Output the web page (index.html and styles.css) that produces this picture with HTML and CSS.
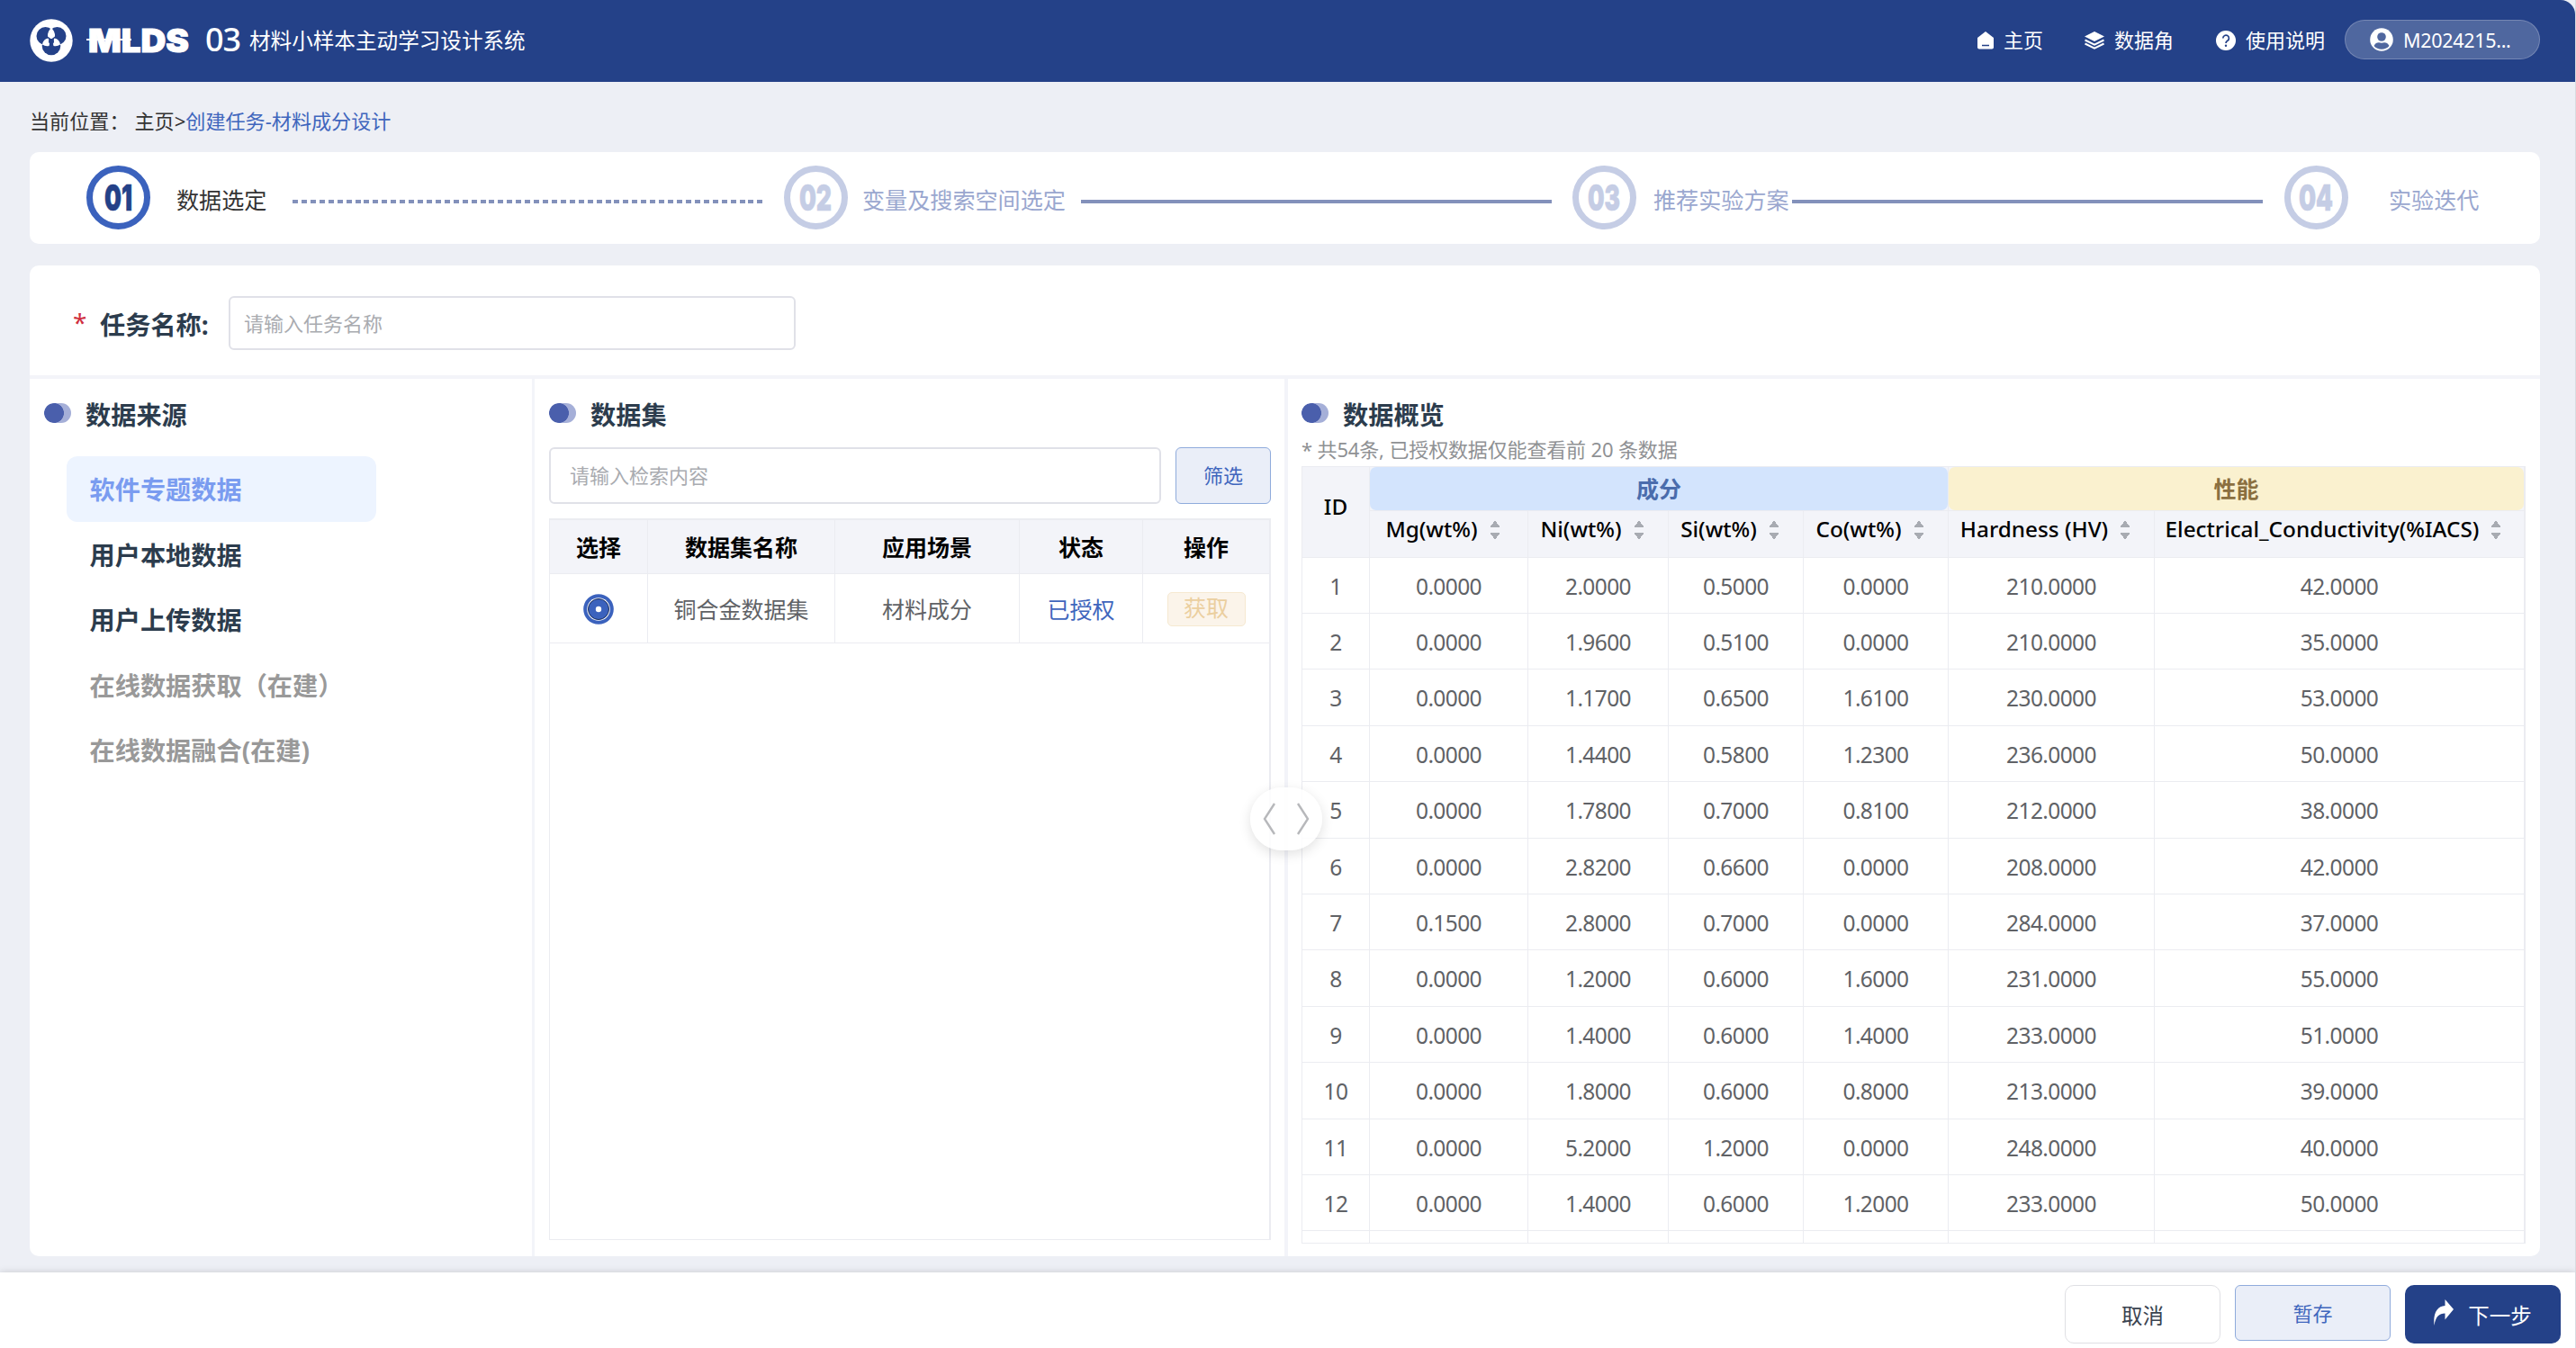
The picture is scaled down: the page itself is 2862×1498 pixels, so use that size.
FILE: index.html
```html
<!DOCTYPE html>
<html lang="zh-CN">
<head>
<meta charset="utf-8">
<title>MLDS 材料小样本主动学习设计系统</title>
<link rel="stylesheet" href="styles.css">
</head>
<body>
<header class="topbar">
  <div class="brand">
    <svg class="brand-mark" width="48" height="48" viewBox="0 0 48 48">
      <circle cx="24" cy="24" r="23.7" fill="#fff"/>
      <circle cx="17.5" cy="19" r="10" fill="#244188"/>
      <circle cx="30.5" cy="19" r="10" fill="#244188"/>
      <circle cx="24" cy="30" r="10.3" fill="#244188"/>
      <path d="M24 10q4.500 4 4 9.500l-4 3-4-3q-.500-5.500 4-9.500zM14 28.500q1-6 6.500-7l2 4-1 4.500q-4 1-7.500-1.500zM34 28.500q-1-6-6.500-7l-2 4 1 4.500q4 1 7.500-1.500z" fill="#fff"/>
      <circle cx="24" cy="25" r="3" fill="#244188"/>
    </svg>
    <svg class="brand-name" width="118" height="46" viewBox="0 0 118 46">
      <text x="2" y="36" textLength="112" lengthAdjust="spacingAndGlyphs">MLDS</text>
      <path d="M0 22h50M62 22h6" stroke="#fff" stroke-width="2"/>
    </svg>
    <span class="brand-no">03</span>
    <span class="brand-title">材料小样本主动学习设计系统</span>
  </div>
  <nav class="nav">
    <a class="nav-item nav-home"><svg width="18" height="20" viewBox="0 0 18 20"><path d="M9 0l9 7v10.500a2 2 0 0 1-2 2H2a2 2 0 0 1-2-2V7z" fill="#fff"/><path d="M5 15.500h8" stroke="#244188" stroke-width="1.500"/></svg><span>主页</span></a>
    <a class="nav-item nav-data"><svg width="22" height="20" viewBox="0 0 22 20"><path d="M11 0l11 5.500-11 5.500L0 5.500z" fill="#fff"/><path d="M.5 9.500L11 14.700l10.500-5.200M.5 13.500L11 18.700l10.500-5.200" fill="none" stroke="#fff" stroke-width="2"/></svg><span>数据角</span></a>
    <a class="nav-item nav-help"><svg width="22" height="22" viewBox="0 0 22 22"><circle cx="11" cy="11" r="11" fill="#fff"/><path d="M7.800 8.500a3.300 3.300 0 1 1 5 2.800c-1.300.8-1.800 1.300-1.800 2.800" fill="none" stroke="#244188" stroke-width="1.700"/><circle cx="11" cy="16.800" r="1.200" fill="#244188"/></svg><span>使用说明</span></a>
    <a class="user"><svg width="26" height="26" viewBox="0 0 26 26"><circle cx="13" cy="13" r="12.800" fill="#fff"/><circle cx="13" cy="10" r="4.800" fill="#50679f"/><path d="M4.500 20c2-4 5-4.200 8.500-3.200 3.500-1 6.500-.8 8.500 3.200a11.500 11.500 0 0 1-17 0z" fill="#50679f"/></svg>M2024215...</a>
  </nav>
</header>

<main class="page">
  <div class="crumb"><span>当前位置：</span><span class="crumb-home">主页&gt;</span><span class="crumb-now">创建任务-材料成分设计</span></div>

  <section class="steps">
    <svg class="step-no active" width="71" height="71" viewBox="0 0 71 71"><circle cx="35.500" cy="35.500" r="32"/><text x="20" y="50" textLength="31" lengthAdjust="spacingAndGlyphs">01</text></svg>
    <span class="step-text s1">数据选定</span>
    <span class="step-line dashed"></span>
    <svg class="step-no" width="71" height="71" viewBox="0 0 71 71"><circle cx="35.500" cy="35.500" r="32"/><text x="17" y="50" textLength="36" lengthAdjust="spacingAndGlyphs">02</text></svg>
    <span class="step-text s2">变量及搜索空间选定</span>
    <span class="step-line"></span>
    <svg class="step-no" width="71" height="71" viewBox="0 0 71 71"><circle cx="35.500" cy="35.500" r="32"/><text x="17" y="50" textLength="36" lengthAdjust="spacingAndGlyphs">03</text></svg>
    <span class="step-text s3">推荐实验方案</span>
    <span class="step-line last"></span>
    <svg class="step-no" width="71" height="71" viewBox="0 0 71 71"><circle cx="35.500" cy="35.500" r="32"/><text x="16" y="50" textLength="38" lengthAdjust="spacingAndGlyphs">04</text></svg>
    <span class="step-text s4">实验迭代</span>
  </section>

  <section class="card">
    <div class="form-row">
      <span class="star">*</span>
      <label class="form-label">任务名称:</label>
      <div class="input name-input">请输入任务名称</div>
    </div>
    <div class="columns">
      <div class="col source">
        <h2 class="title"><i class="dots"></i>数据来源</h2>
        <ul class="source-list">
          <li class="on">软件专题数据</li>
          <li>用户本地数据</li>
          <li>用户上传数据</li>
          <li class="off">在线数据获取（在建）</li>
          <li class="off">在线数据融合(在建)</li>
        </ul>
      </div>
      <div class="col dataset">
        <h2 class="title"><i class="dots"></i>数据集</h2>
        <div class="search">
          <div class="input search-input">请输入检索内容</div>
          <div class="btn-filter">筛选</div>
        </div>
        <div class="table-box set-box">
          <table class="set-table">
            <colgroup><col class="a1"><col class="a2"><col class="a3"><col class="a4"><col class="a5"></colgroup>
            <thead><tr><th>选择</th><th>数据集名称</th><th>应用场景</th><th>状态</th><th>操作</th></tr></thead>
            <tbody><tr>
              <td><svg class="radio" width="34" height="34" viewBox="0 0 34 34"><circle cx="17" cy="17" r="16.800" fill="#3b62bd"/><circle cx="17" cy="17" r="12.800" fill="#fff"/><circle cx="17" cy="17" r="11.500" fill="#3b62bd" stroke="#1b2f5e" stroke-width="1"/><circle cx="17" cy="17" r="3.200" fill="#fff"/></svg></td>
              <td>铜合金数据集</td><td>材料成分</td><td class="granted">已授权</td><td><span class="btn-get">获取</span></td>
            </tr></tbody>
          </table>
        </div>
      </div>
      <div class="col overview">
        <h2 class="title"><i class="dots"></i>数据概览</h2>
        <p class="note">* 共54条, 已授权数据仅能查看前 20 条数据</p>
        <div class="table-box data-box">
          <table class="data-table">
            <colgroup><col class="c1"><col class="c2"><col class="c3"><col class="c4"><col class="c5"><col class="c6"><col class="c7"></colgroup>
            <thead>
              <tr class="groups"><th rowspan="2" class="id">ID</th><th colspan="4" class="group"><div class="comp">成分</div></th><th colspan="2" class="group"><div class="perf">性能</div></th></tr>
              <tr class="fields"><th>Mg(wt%)<i class="sort"></i></th><th>Ni(wt%)<i class="sort"></i></th><th>Si(wt%)<i class="sort"></i></th><th>Co(wt%)<i class="sort"></i></th><th>Hardness (HV)<i class="sort"></i></th><th>Electrical_Conductivity(%IACS)<i class="sort"></i></th></tr>
            </thead>
            <tbody>
              <tr><td>1</td><td>0.0000</td><td>2.0000</td><td>0.5000</td><td>0.0000</td><td>210.0000</td><td>42.0000</td></tr>
              <tr><td>2</td><td>0.0000</td><td>1.9600</td><td>0.5100</td><td>0.0000</td><td>210.0000</td><td>35.0000</td></tr>
              <tr><td>3</td><td>0.0000</td><td>1.1700</td><td>0.6500</td><td>1.6100</td><td>230.0000</td><td>53.0000</td></tr>
              <tr><td>4</td><td>0.0000</td><td>1.4400</td><td>0.5800</td><td>1.2300</td><td>236.0000</td><td>50.0000</td></tr>
              <tr><td>5</td><td>0.0000</td><td>1.7800</td><td>0.7000</td><td>0.8100</td><td>212.0000</td><td>38.0000</td></tr>
              <tr><td>6</td><td>0.0000</td><td>2.8200</td><td>0.6600</td><td>0.0000</td><td>208.0000</td><td>42.0000</td></tr>
              <tr><td>7</td><td>0.1500</td><td>2.8000</td><td>0.7000</td><td>0.0000</td><td>284.0000</td><td>37.0000</td></tr>
              <tr><td>8</td><td>0.0000</td><td>1.2000</td><td>0.6000</td><td>1.6000</td><td>231.0000</td><td>55.0000</td></tr>
              <tr><td>9</td><td>0.0000</td><td>1.4000</td><td>0.6000</td><td>1.4000</td><td>233.0000</td><td>51.0000</td></tr>
              <tr><td>10</td><td>0.0000</td><td>1.8000</td><td>0.6000</td><td>0.8000</td><td>213.0000</td><td>39.0000</td></tr>
              <tr><td>11</td><td>0.0000</td><td>5.2000</td><td>1.2000</td><td>0.0000</td><td>248.0000</td><td>40.0000</td></tr>
              <tr><td>12</td><td>0.0000</td><td>1.4000</td><td>0.6000</td><td>1.2000</td><td>233.0000</td><td>50.0000</td></tr>
              <tr><td></td><td></td><td></td><td></td><td></td><td></td><td></td></tr>
            </tbody>
          </table>
        </div>
        <div class="splitter"><svg width="52" height="36" viewBox="0 0 52 36"><path d="M13 1L2 18l11 17M39 1l11 17-11 17" fill="none" stroke="#b7b8bb" stroke-width="2.400"/></svg></div>
      </div>
    </div>
  </section>
</main>

<footer class="actions">
  <div class="btn cancel">取消</div>
  <div class="btn save">暂存</div>
  <div class="btn next"><svg width="22" height="29" viewBox="0 0 22 29"><path d="M12.500 0L22 11l-9.500 11.500v-7C6 15.500 2 19 .5 29-1 15 4 7.500 12.500 7z" fill="#fff"/></svg>下一步</div>
</footer>
</body>
</html>
```
FILE: styles.css
```css
* { box-sizing: border-box; }
body {
  margin: 0;
  width: 2862px;
  height: 1498px;
  display: flex;
  flex-direction: column;
  overflow: hidden;
  background: #edeff5;
  color: #333;
  font-family: "Noto Sans", "Noto Sans CJK SC", sans-serif;
  font-size: 22px;
  border-right: 1px solid #d9dbe0;
}
svg { display: block; flex: none; }

.topbar {
  flex: none;
  height: 91px;
  display: flex;
  justify-content: space-between;
  align-items: center;
  padding: 0 39px 2px 33px;
  background: #244188;
  color: #fff;
  border-top-right-radius: 16px;
}
.brand { display: flex; align-items: center; }
.brand-name { margin-left: 15px; overflow: visible; }
.brand-name text { font: 900 35px "Inter", sans-serif; fill: #fff; stroke: #fff; stroke-width: 1; }
.brand-no { margin-left: 14px; padding-bottom: 1px; font-size: 36px; font-weight: 500; line-height: 40px; width: 42px; letter-spacing: -1px; }
.brand-title { margin-left: 7px; padding-bottom: 2px; font-size: 23.6px; }
.nav { display: flex; align-items: center; }
.nav-item { display: flex; align-items: center; gap: 11px; }
.nav-item span { padding-bottom: 3px; }
.nav-data { margin-left: 46px; }
.nav-help { margin-left: 47px; }
.user {
  display: flex;
  align-items: center;
  gap: 11px;
  width: 217px;
  height: 44px;
  margin: 0 0 1px 22px;
  padding-left: 27px;
  border: 1px solid rgba(255, 255, 255, .22);
  border-radius: 22px;
  background: rgba(255, 255, 255, .2);
  font-size: 21.5px;
  letter-spacing: -0.3px;
}

.page { flex: none; height: 1323px; padding: 0 39px 0 33px; }
.crumb { height: 78px; padding-top: 7px; display: flex; align-items: center; font-size: 22.1px; line-height: 30px; }
.crumb-home { margin-left: 6px; }
.crumb-now { color: #3f66bd; }

.steps {
  height: 102px;
  display: flex;
  align-items: center;
  padding-left: 63px;
  background: #fff;
  border-radius: 10px;
  color: #9aa7cf;
  font-size: 25.1px;
}
.step-no { margin-bottom: 1px; }
.step-no circle { fill: none; stroke: #c5cde5; stroke-width: 7; }
.step-no text { font: 900 40px "Inter", sans-serif; fill: #c5cde5; stroke: #c5cde5; stroke-width: .6; }
.step-no.active circle { stroke: #3b62bd; }
.step-no.active text { fill: #244188; stroke: #244188; }
.step-text { flex: none; padding-top: 1px; white-space: nowrap; }
.s1 { margin: 0 29px; width: 100px; color: #333; }
.s2 { margin: 0 18px 0 16px; width: 225px; }
.s3 { margin-left: 19px; width: 154px; }
.s4 { margin-left: 45px; }
.step-line { flex: none; width: 523px; height: 4px; margin: 8px 23px 0 0; background: #8391bb; }
.step-line.last { margin-right: 24px; }
.step-line.dashed { background: repeating-linear-gradient(90deg, #8391bb 0 6px, transparent 6px 9.930px); }

.card {
  height: 1101px;
  margin-top: 24px;
  display: flex;
  flex-direction: column;
  background: #fff;
  border-radius: 10px;
}
.form-row {
  height: 126px;
  flex: none;
  display: flex;
  align-items: center;
  padding: 6px 0 0 48px;
  border-bottom: 4px solid #f3f4f9;
}
.star { width: 30px; padding-bottom: 3px; color: #d0303f; font-size: 28px; line-height: 30px; }
.form-label { width: 143px; color: #2c3c4d; font-size: 28.2px; font-weight: 700; }
.input {
  display: flex;
  align-items: center;
  border: 2px solid #e0e1e8;
  border-radius: 6px;
  color: #a9abb0;
  font-size: 22px;
}
.name-input { width: 630px; height: 60px; padding: 0 0 3px 15px; }

.columns { flex: 1; display: grid; grid-template-columns: 561px 837px 1fr; min-height: 0; }
.source { padding-left: 16px; border-right: 3px solid #f3f4f9; }
.dataset { padding: 0 15px 0 16px; border-right: 4px solid #f3f4f9; }
.overview { position: relative; padding-left: 15px; }
.title {
  height: 76px;
  margin: 0;
  display: flex;
  align-items: center;
  color: #2c3c4d;
  font-size: 28.2px;
  font-weight: 700;
}
.dots {
  width: 30px;
  height: 22px;
  margin-right: 16px;
  border-radius: 11px;
  background: radial-gradient(circle at 11px 11px, #4a5fac 10.600px, transparent 11.200px), #a5afd8;
}
.source-list { margin: 10px 0 0 25px; padding: 0; list-style: none; width: 344px; }
.source-list li {
  height: 72.600px;
  padding: 2px 0 0 25.500px;
  line-height: 70px;
  color: #2c3c4d;
  font-size: 28.2px;
  font-weight: 700;
  white-space: nowrap;
}
.source-list .on { background: #edf4ff; color: #7a9cf0; border-radius: 12px; }
.source-list .off { color: #999; }

.search { display: flex; gap: 16px; height: 63px; }
.search-input { flex: 1; padding: 0 0 4px 21px; }
.btn-filter {
  width: 106px;
  display: flex;
  align-items: center;
  justify-content: center;
  padding-bottom: 4px;
  border: 1px solid #8fabdc;
  border-radius: 6px;
  background: #eaeef8;
  color: #3f66bd;
}
.table-box { border: 1px solid #ebecf1; border-right-width: 2px; overflow: hidden; }
.set-box { height: 802px; margin-top: 16px; border-top-width: 2px; }
table { width: 100%; table-layout: fixed; border-spacing: 0; font-size: 25px; text-align: center; }
th, td { padding: 0; border-right: 1px solid #ebecf1; border-bottom: 1px solid #ebecf1; }
th:last-child, td:last-child { border-right: 0; }
.groups th.group:last-child { border-right: 0; }
th { background: #f3f4f9; color: #000; }
td { color: #606266; }
.set-table th { height: 60px; padding-bottom: 2px; font-weight: 700; }
.set-table td { height: 77px; }
.a1 { width: 109px; }
.a2 { width: 208px; }
.a3 { width: 205px; }
.a4 { width: 137px; }
.radio { margin: 1px auto 0; }
.set-table .granted { color: #3f66bd; }
.btn-get {
  display: block;
  width: 87px;
  height: 38px;
  margin: 2px auto 0;
  border: 1px solid #f6e9d0;
  border-radius: 5px;
  background: #fbf4ea;
  color: #ebcf9f;
  line-height: 33px;
}

.note { height: 34px; margin: -15px 0 2px; color: #8f9194; font-size: 22px; line-height: 34px; white-space: pre; letter-spacing: -0.15px; }
.data-box { width: 1360px; height: 864px; }
.c1 { width: 75px; }
.c2 { width: 176px; }
.c3 { width: 156px; }
.c4 { width: 150px; }
.c5 { width: 161px; }
.c6 { width: 229px; }
.data-table th { font-weight: 500; font-size: 24.3px; white-space: nowrap; }
.data-table .id { padding-bottom: 14px; }
.groups .group { height: 49px; font-size: 25px; font-weight: 700; }
.comp, .perf { height: 48px; line-height: 48px; border-radius: 7px; font-size: 25px; }
.comp { background: #d3e4fd; color: #4a6cac; }
.perf { background: #faf1cf; color: #8a6f3f; }
.fields th { height: 52px; padding-bottom: 11px; line-height: 34px; }
.sort {
  display: inline-block;
  width: 14px;
  height: 22px;
  margin: 0 12px;
  vertical-align: -3px;
  background:
    conic-gradient(from 145deg at 50% 0, #a8abb2 70deg, transparent 0) top / 14px 8px no-repeat,
    conic-gradient(from -35deg at 50% 100%, #a8abb2 70deg, transparent 0) bottom / 14px 8px no-repeat;
}
.data-table td { height: 62px; padding-top: 1px; font-size: 24.5px; letter-spacing: -0.6px; }
.data-table tbody tr:nth-child(5n+3) td, .data-table tbody tr:nth-child(5n) td { height: 63px; }

.splitter {
  position: absolute;
  left: -42px;
  top: 454px;
  width: 80px;
  height: 70px;
  display: flex;
  align-items: center;
  justify-content: center;
  border-radius: 35px;
  background: rgba(255, 255, 255, .85);
  box-shadow: 0 4px 14px rgba(0, 0, 0, .12);
}

.actions {
  flex: 1;
  display: flex;
  justify-content: flex-end;
  gap: 16px;
  padding: 14px 16px 0 0;
  background: #fff;
  box-shadow: 0 0 8px rgba(0, 0, 0, .16);
}
.btn {
  width: 173px;
  height: 65px;
  display: flex;
  align-items: center;
  justify-content: center;
  border-radius: 10px;
  font-size: 23.500px;
}
.cancel { border: 1px solid #dfe0e4; color: #3a4350; }
.save { height: 62px; padding-bottom: 3px; border: 1px solid #8fabdc; border-radius: 6px; background: #eaeef8; color: #3f66bd; font-size: 22px; }
.next { gap: 16px; background: #244188; color: #fff; }
.next svg { margin-bottom: 4px; }
```
